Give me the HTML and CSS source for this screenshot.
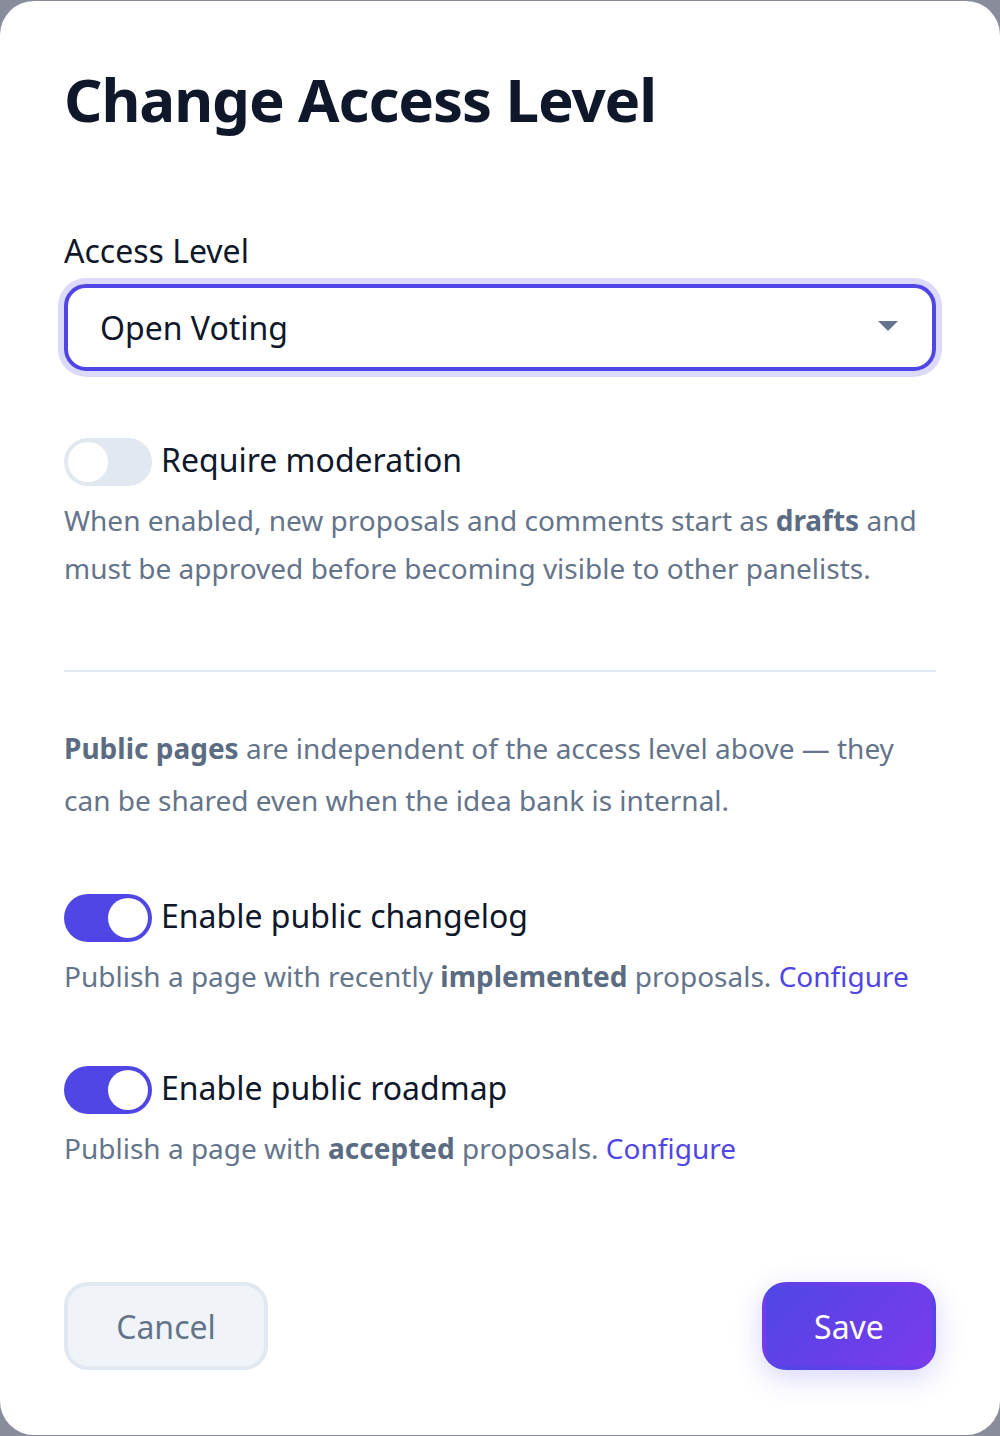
FILE: index.html
```html
<!DOCTYPE html>
<html lang="en">
<head>
<meta charset="utf-8">
<title>Change Access Level</title>
<link rel="stylesheet" href="styles.css">
</head>
<body>
<div class="modal">
  <h1 class="title">Change Access Level</h1>

  <label class="field-label">Access Level</label>
  <div class="select">
    <span class="select-value">Open Voting</span>
    <span class="select-arrow"></span>
  </div>

  <div class="toggle-row first">
    <span class="toggle"><span class="knob"></span></span>
    <span class="toggle-label">Require moderation</span>
  </div>
  <p class="desc">When enabled, new proposals and comments start as <b>drafts</b> and must be approved before becoming visible to other panelists.</p>

  <hr class="divider">

  <p class="note"><b>Public pages</b> are independent of the access level above — they can be shared even when the idea bank is internal.</p>

  <div class="toggle-row second">
    <span class="toggle on"><span class="knob"></span></span>
    <span class="toggle-label">Enable public changelog</span>
  </div>
  <p class="desc">Publish a page with recently <b>implemented</b> proposals. <a class="link" href="#">Configure</a></p>

  <div class="toggle-row third">
    <span class="toggle on"><span class="knob"></span></span>
    <span class="toggle-label">Enable public roadmap</span>
  </div>
  <p class="desc">Publish a page with <b>accepted</b> proposals. <a class="link" href="#">Configure</a></p>

  <div class="actions">
    <button class="btn btn-cancel">Cancel</button>
    <button class="btn btn-save">Save</button>
  </div>
</div>
</body>
</html>
```

FILE: styles.css
```css
* { box-sizing: border-box; }
html, body { margin: 0; padding: 0; }
body {
  background: #898d9b;
  font-family: "Noto Sans", "Open Sans", sans-serif;
  height: 1436px;
  overflow: hidden;
}
.modal {
  margin-top: 1px;
  height: 1434px;
  background: #ffffff;
  border-radius: 34px;
  padding: 62px 64px 0 64px;
  display: flex;
  flex-direction: column;
}
.title {
  margin: 0;
  font-size: 60px;
  line-height: 72px;
  font-weight: 700;
  color: #0f172a;
  letter-spacing: -1.1px;
}
.field-label {
  display: block;
  margin-top: 96px;
  font-size: 32px;
  line-height: 40px;
  color: #0f172a;
}
.select {
  margin-top: 13px;
  height: 87px;
  border: 4px solid #4f46e5;
  border-radius: 22px;
  box-shadow: 0 0 0 6px #dcdafa;
  display: flex;
  align-items: center;
  justify-content: space-between;
  padding: 0 34px 0 32px;
}
.select-value {
  font-size: 32px;
  color: #0f172a;
}
.select-arrow {
  width: 0;
  height: 0;
  border-left: 10px solid transparent;
  border-right: 10px solid transparent;
  border-top: 10px solid #64748b;
  margin-top: -4px;
}
.toggle-row {
  display: flex;
  align-items: flex-start;
  gap: 9px;
}
.toggle-row.first { margin-top: 67px; }
.toggle-row.second { margin-top: 68px; }
.toggle-row.third { margin-top: 66px; }
.toggle {
  width: 88px;
  height: 48px;
  border-radius: 24px;
  background: #e2e8f0;
  padding: 4px;
  display: flex;
  flex: none;
}
.toggle .knob {
  width: 40px;
  height: 40px;
  border-radius: 50%;
  background: #ffffff;
}
.toggle.on { background: #4f46e5; justify-content: flex-end; }
.toggle-label {
  font-size: 32px;
  line-height: 44px;
  color: #0f172a;
}
.desc {
  margin: 10px 0 0 0;
  font-size: 28px;
  line-height: 48px;
  color: #64748b;
}
.desc b, .note b { font-weight: 700; color: #5b6b82; }
.link { color: #4f46e5; text-decoration: none; }
.divider {
  margin: 78px 0 0 0;
  border: none;
  border-top: 2px solid #e2e8f0;
  height: 0;
}
.note {
  margin: 50px 0 0 0;
  font-size: 28px;
  line-height: 52px;
  color: #64748b;
}
.actions {
  margin-top: 110px;
  display: flex;
  justify-content: space-between;
}
.btn {
  height: 88px;
  padding: 0 48px;
  border-radius: 24px;
  font-family: "Noto Sans", "Open Sans", sans-serif;
  font-size: 32px;
  border: 4px solid transparent;
}
.btn-cancel {
  background: #f0f4f9;
  border-color: #e2e8f0;
  color: #64748b;
  width: 204px;
}
.btn-save {
  width: 174px;
  background: linear-gradient(135deg, #4f46e5, #7c3aed);
  color: #ffffff;
  box-shadow: 0 8px 28px rgba(79, 70, 229, 0.22);
}
```
